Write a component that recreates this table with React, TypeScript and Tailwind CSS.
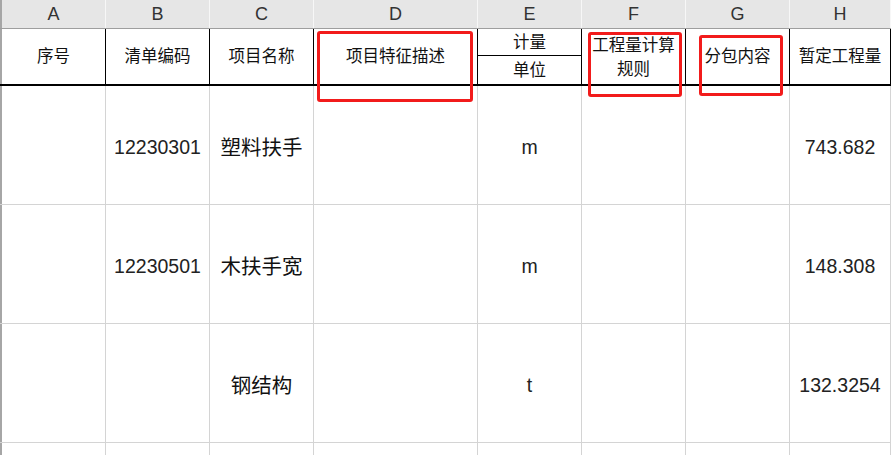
import { FC } from 'react';

// column widths incl. right border (A also carries the 2px left edge)
const cols = [
    { key: 'A', w: 'w-[106px]' },
    { key: 'B', w: 'w-[104px]' },
    { key: 'C', w: 'w-[104px]' },
    { key: 'D', w: 'w-[164px]' },
    { key: 'E', w: 'w-[104px]' },
    { key: 'F', w: 'w-[104px]' },
    { key: 'G', w: 'w-[104px]' },
    { key: 'H', w: 'flex-1' },
];

const rows = [
    ['', '12230301', '塑料扶手', '', 'm', '', '', '743.682'],
    ['', '12230501', '木扶手宽', '', 'm', '', '', '148.308'],
    ['', '', '钢结构', '', 't', '', '', '132.3254'],
    ['', '', '', '', '', '', '', ''],
];

const font = { fontFamily: '"Liberation Sans", "Noto Sans CJK SC", sans-serif' };

const isCjk = (s: string) => /[^\x00-\x7f]/.test(s);

const HeaderCell: FC<{ w: string; first?: boolean; children?: React.ReactNode }> = ({ w, first, children }) => (
    <div
        className={`${w} shrink-0 h-full flex items-center justify-center text-center border-r border-black ${
            first ? 'border-l-2 border-l-[#a6a6a6]' : ''
        }`}
    >
        {children}
    </div>
);

export default function App() {
    return (
        <div className="relative w-[891px] h-[455px] overflow-hidden bg-white text-[#111]" style={font}>
            {/* column letters */}
            <div className="flex h-[29px] bg-[#e6e6e6] border-b border-[#9e9e9e]">
                {cols.map((c, i) => (
                    <div
                        key={c.key}
                        className={`${c.w} shrink-0 flex items-center justify-center text-[18px] text-[#333] border-r border-[#f7f7f7] ${
                            i === 0 ? 'border-l-2 border-l-[#a6a6a6]' : ''
                        }`}
                    >
                        {c.key}
                    </div>
                ))}
            </div>

            {/* table header row */}
            <div className="flex h-[57px] border-b-2 border-black text-[16.5px]">
                <HeaderCell w={cols[0].w} first>序号</HeaderCell>
                <HeaderCell w={cols[1].w}>清单编码</HeaderCell>
                <HeaderCell w={cols[2].w}>项目名称</HeaderCell>
                <HeaderCell w={cols[3].w}>项目特征描述</HeaderCell>
                <div className={`${cols[4].w} shrink-0 h-full flex flex-col border-r border-black`}>
                    <div className="h-[27px] flex items-center justify-center border-b border-black">计量</div>
                    <div className="flex-1 flex items-center justify-center">单位</div>
                </div>
                <HeaderCell w={cols[5].w}>
                    <span className="leading-[24px] px-[9px]">工程量计算规则</span>
                </HeaderCell>
                <HeaderCell w={cols[6].w}>分包内容</HeaderCell>
                <HeaderCell w={cols[7].w}>暂定工程量</HeaderCell>
            </div>

            {/* body rows */}
            {rows.map((r, ri) => (
                <div key={ri} className="flex h-[119px] border-b border-[#d4d4d4]">
                    {r.map((v, ci) => (
                        <div
                            key={ci}
                            className={`${cols[ci].w} shrink-0 h-full flex items-center justify-center pt-[6px] border-r border-[#d4d4d4] ${
                                ci === 0 ? 'border-l-2 border-l-[#a6a6a6]' : ''
                            } ${isCjk(v) ? 'text-[20.5px]' : 'text-[19.5px] text-[#222]'}`}
                        >
                            {v}
                        </div>
                    ))}
                </div>
            ))}

            {/* red annotation boxes */}
            <div className="absolute left-[317px] top-[31px] w-[156px] h-[71px] border-[3px] border-[#f21b1b] rounded-[3px]" />
            <div className="absolute left-[588px] top-[32px] w-[94px] h-[65px] border-[3px] border-[#f21b1b] rounded-[3px]" />
            <div className="absolute left-[699px] top-[35px] w-[84px] h-[61px] border-[3px] border-[#f21b1b] rounded-[3px]" />
        </div>
    );
}
